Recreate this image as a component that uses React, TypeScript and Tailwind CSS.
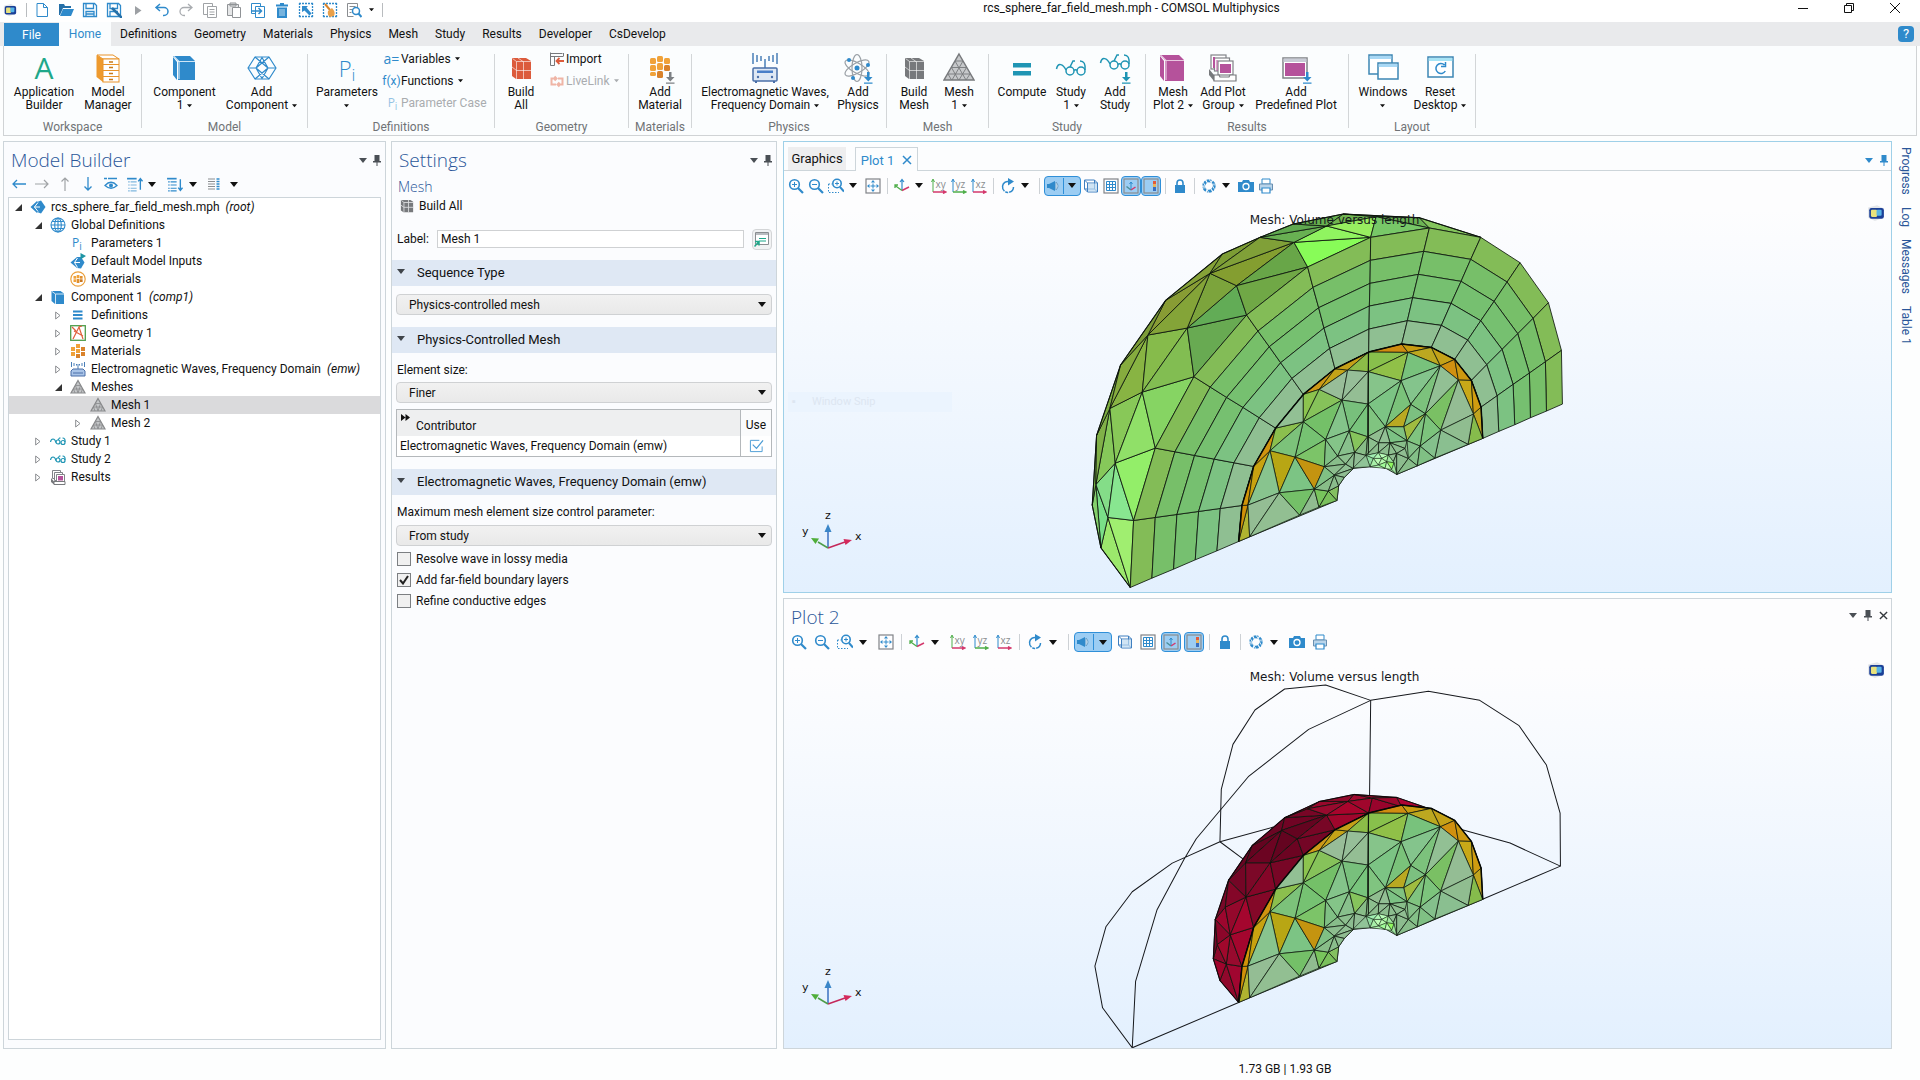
import { useState } from 'react';
import type { ReactNode } from 'react';

/* ---------- icon helpers ---------- */

const B = '#2f8acb';

function Ic({ s = 16, vb = 16, children }: { s?: number; vb?: number; children: ReactNode }) {
  return (
    <svg width={s} height={s} viewBox={`0 0 ${vb} ${vb}`} fill="none" className="block shrink-0" aria-hidden="true">
      {children}
    </svg>
  );
}

function Caret({ color = '#111', big = false }: { color?: string; big?: boolean }) {
  const w = big ? 8 : 5;
  return (
    <svg width={w} height={w / 2 + 1} viewBox="0 0 8 5" fill={color} className="inline-block shrink-0" aria-hidden="true">
      <path d="M0 0h8L4 5z" />
    </svg>
  );
}

function Pin({ color = '#4a4f55' }: { color?: string }) {
  return (
    <svg width="8" height="11" viewBox="0 0 8 11" fill={color} className="block shrink-0" aria-hidden="true">
      <path d="M1.5 0h5v6H8v1.500H4.500V11h-1V7.500H0V6h1.500z" />
    </svg>
  );
}

function AppCube({ s = 14 }: { s?: number }) {
  return (
    <Ic s={s}>
      <path d="M1 3l8-2 6 3v8l-8 3-6-3z" fill="#e3e6ea" />
      <rect x="2" y="3.500" width="13" height="9.500" rx="2" fill="#1b3f97" />
      <rect x="3.500" y="5" width="5.500" height="6.500" rx="1" fill="#e9e27c" />
      <rect x="8.500" y="5" width="4.500" height="5.500" rx="1" fill="#57b4e6" />
    </Ic>
  );
}

/* ---------- ribbon icons, 32px grid ---------- */

const Big = ({ children }: { children: ReactNode }) => (
  <Ic s={32} vb={32}>
    {children}
  </Ic>
);

const cube = (x: number, y: number, w: number, h: number, d: number, c: string) => (
  <g>
    <path d={`M${x} ${y}h${w}l${d} ${d}h-${w}z`} fill={c} />
    <path d={`M${x} ${y + 1}l${d - 1} ${d}v${h}l-${d - 1} -${d}z`} fill={c} />
    <rect x={x + d} y={y + d + 1} width={w} height={h} fill={c} />
  </g>
);

const ModelManagerIcon = () => (
  <Big>
    <path d="M5 3h16l6 4H11z" fill="#fff" stroke="#e8932a" />
    <path d="M4.500 3L11 7v23l-6.500-5z" fill="#ee9a2e" />
    <rect x="11" y="7" width="16" height="23" fill="#fff" stroke="#e8932a" />
    <path d="M11 12.500h16M11 18.500h16M11 24.500h16" stroke="#e8932a" />
    <path d="M17 10h4M17 15.500h4M17 21.500h4M17 27.500h4" stroke="#c77a1a" strokeWidth="1.500" />
  </Big>
);
const ComponentIcon = () => (
  <Big>
    {cube(4, 4, 17, 18, 5, B)}
    <path d="M5 4.500l5 5h16M10 9.500V27" stroke="#cfe6f6" strokeWidth="1.200" />
  </Big>
);
const AddComponentIcon = () => (
  <Big>
    <g stroke={B} strokeWidth="1.200" strokeLinejoin="round">
      <path d="M9 5h14l7 11-7 11H9L2 16z" />
      <path d="M9 5l13 11-13 11M23 5L10 16l13 11M2 16h8M22 16h8M10 16l6-10.500L22 16l-6 10.500z" />
    </g>
  </Big>
);
const BrickIcon = ({ c }: { c: string }) => (
  <Big>
    <path d="M7 6h14l5 3v18H11l-4-3z" fill={c} />
    <path d="M7.500 6.500l4 3h14.500M11.500 9.500V27M18.500 9.500V27M11.500 18.500H26M7 15l4.500 3.500M13 6l5 3.500" stroke="#fff" strokeOpacity=".6" />
  </Big>
);
const honey = (c1: string, c2: string) => (
  <g>
    <rect x="6" y="6" width="6" height="6" rx="1.500" fill={c1} />
    <rect x="13" y="4" width="6" height="6" rx="1.500" fill={c1} />
    <rect x="20" y="6" width="6" height="6" rx="1.500" fill={c1} />
    <rect x="6" y="13" width="6" height="6" rx="1.500" fill={c1} />
    <rect x="13" y="11" width="6" height="7" rx="1.500" fill={c1} />
    <rect x="20" y="13" width="6" height="6" rx="1.500" fill={c2} />
    <rect x="6" y="20" width="6" height="4" rx="1.500" fill={c1} />
    <rect x="13" y="19" width="6" height="7" rx="1.500" fill={c2} />
  </g>
);
const arrowDown = (x: number, y: number, c: string) => (
  <path d={`M${x - 1} ${y}h2.500v5h3l-4.200 4.500L${x - 4} ${y + 5}h3zM${x - 4} ${y + 10.500}h8.500v1.200h-8.500z`} fill={c} />
);
const AddMaterialIcon = () => (
  <Big>
    {honey('#f0a23a', '#d9822b')}
    {arrowDown(26, 20, '#7c8084')}
  </Big>
);
const EmIcon = () => (
  <Big>
    <path d="M4 1v11M8 3v7M12 4v5M20 4v5M24 3v7M28 1v11M16 7v9" stroke="#4a7fb8" strokeWidth="1.500" />
    <rect x="4" y="16" width="24" height="13" rx="1" fill="#dfe8f4" stroke="#4a6fa8" strokeWidth="1.500" />
    <rect x="8" y="18.500" width="16" height="2.500" fill="#4a7fc8" />
    <circle cx="9" cy="25" r="1.200" fill="#4a6fa8" />
    <circle cx="23" cy="25" r="1.200" fill="#4a6fa8" />
    <path d="M7 29v2M25 29v2" stroke="#4a6fa8" strokeWidth="2" />
  </Big>
);
const AtomIcon = () => (
  <Big>
    <g stroke="#9aa0a6" strokeWidth="1.200">
      <ellipse cx="15" cy="16" rx="5" ry="13.500" />
      <ellipse cx="15" cy="16" rx="5" ry="13.500" transform="rotate(60 15 16)" />
      <ellipse cx="15" cy="16" rx="5" ry="13.500" transform="rotate(-60 15 16)" />
    </g>
    <circle cx="15" cy="16" r="2.500" fill={B} />
    <circle cx="7" cy="8" r="2" fill={B} />
    <circle cx="26" cy="13" r="2" fill={B} />
    <circle cx="11" cy="26" r="2" fill={B} />
    {arrowDown(26, 20, B)}
  </Big>
);
const MeshIcon = () => (
  <Big>
    <path d="M16 2L31 28H1z" fill="#c6c8ca" stroke="#77797c" strokeWidth="1.500" />
    <g stroke="#77797c" strokeWidth=".9">
      <path d="M12 9h8M8.500 15.500h15M5 22h22M12 9l11 19M8.500 15.500L15.500 28M5 22l3.500 6M20 9L9 28M23.500 15.500L16 28M27 22l-4 6" />
    </g>
  </Big>
);
const ComputeIcon = () => (
  <Big>
    <path d="M7 11h18v4.500H7zM7 19h18v4.500H7z" fill="#1f95b4" />
  </Big>
);
const glasses = (dy: number) => (
  <g stroke="#1f95b4" strokeWidth="1.500" transform={`translate(0 ${dy})`}>
    <circle cx="15" cy="19" r="4" />
    <circle cx="26" cy="19" r="4" />
    <path d="M19 18.500q1.500-1.500 3 0M11 18C8 12 3 10 1.500 17M15 15l3-6h2M30 18q1-9-5-9" />
  </g>
);
const StudyIcon = () => <Big>{glasses(0)}</Big>;
const AddStudyIcon = () => (
  <Big>
    {glasses(-6)}
    {arrowDown(27, 20, '#1f95b4')}
  </Big>
);
const MeshPlotIcon = () => (
  <Big>
    {cube(3, 3, 19, 20, 5, '#b5529b')}
    <path d="M4 3.500l5 5h18M9 8.500V28" stroke="#e8c6df" strokeWidth="1.200" />
  </Big>
);
const PlotGroupIcon = () => (
  <Big>
    <g stroke="#808387" strokeWidth="1.200">
      <rect x="4" y="3" width="15" height="14" fill="#fff" />
      <rect x="7.500" y="6" width="15" height="13" fill="#fff" />
      <rect x="11" y="9" width="15" height="14" fill="#fff" />
    </g>
    <path d="M6 5h2v11H6zM9.500 8h1v11h-1zM13 12h11v9H13z" fill="#b5529b" />
    <path d="M2 17l5 6v6l-5-6z" fill="#77797c" />
    <path d="M7 23h5l1 2h9l1-2h6v6H7z" fill="#fff" stroke="#77797c" strokeWidth="1.200" />
  </Big>
);
const PredefIcon = () => (
  <Big>
    <rect x="3" y="6" width="24" height="20" fill="#fff" stroke="#808387" strokeWidth="1.500" />
    <rect x="3.500" y="6.500" width="23" height="3.500" fill="#c9ccd6" />
    <rect x="5" y="11" width="20" height="13" fill="#b5529b" />
    {arrowDown(27, 20, B)}
  </Big>
);
const WindowsIcon = () => (
  <Big>
    <rect x="2" y="3" width="23" height="19" fill="#fff" stroke="#3d86b4" strokeWidth="1.500" />
    <path d="M2.700 4h21.600v3H2.700z" fill="#a8d8f5" />
    <rect x="11" y="11" width="20" height="16" fill="#fff" stroke="#3d86b4" strokeWidth="1.500" />
    <path d="M11.700 12h18.600v3H11.700z" fill="#a8d8f5" />
  </Big>
);
const ResetIcon = () => (
  <Big>
    <rect x="4" y="5" width="25" height="20" fill="#fff" stroke="#3d86b4" strokeWidth="1.500" />
    <path d="M4.700 6h23.600v3H4.700z" fill="#a8e4f5" />
    <path d="M20.500 13a5 5 0 1 0 .800 6M17 14.500h4.500V10" stroke={B} strokeWidth="1.500" />
  </Big>
);

/* ---------- small icons ---------- */

const TitleIcons: ReactNode[] = [
  <Ic key="new"><path d="M3 1.500h6.500l4 4v9H3zM9.500 1.500v4h4" stroke={B} fill="#fff" /></Ic>,
  <Ic key="open"><path d="M1 2h5l1 2h6v2H5l-3 7H1z" fill="#2670a8" /><path d="M5 7h11l-3 7H2z" fill={B} /></Ic>,
  <Ic key="save"><path d="M1.500 1.500h11l2 2v11h-13zM4 1.500v5h7.500v-5M4 14.500v-5h8v5M4.500 12h7" stroke={B} strokeWidth="1.300" /></Ic>,
  <Ic key="saveas"><path d="M1.500 1.500h11l2 2v11h-13zM4 1.500v5h7.500v-5M4 14.500v-5h8" stroke={B} strokeWidth="1.300" /><path d="M6 6l8 8 2 2" stroke="#2670a8" strokeWidth="2.500" /></Ic>,
  <Ic key="play"><path d="M5 4l6.500 4.500L5 13z" fill="#9da0a4" /></Ic>,
  <Ic key="undo"><path d="M6 2L2 5.500 6 9M2.500 5.500H10a4 4 0 0 1 0 8H9" stroke={B} strokeWidth="1.500" /></Ic>,
  <Ic key="redo"><path d="M10 2l4 3.500L10 9M13.500 5.500H6a4 4 0 0 0 0 8h1" stroke="#a9acb0" strokeWidth="1.300" /></Ic>,
  <Ic key="copy"><path d="M1.500 1.500h9v11h-9z" stroke="#a0a3a6" /><path d="M5.500 4.500h9v11h-9zM7.500 7.500h5M7.500 10h5M7.500 12.500h5" fill="#fff" stroke="#a0a3a6" /></Ic>,
  <Ic key="paste"><path d="M1.500 2.500h11v11h-11zM4 1h6v3H4z" stroke="#909396" fill="#e6e7e8" /><path d="M6.500 5.500h8v10h-8z" fill="#fff" stroke="#909396" /></Ic>,
  <Ic key="dup"><path d="M1.500 1.500h9v10h-9z" stroke={B} /><path d="M5.500 4.500h9v11h-9z" fill="#fff" stroke={B} /><path d="M2 9h9M8.500 6l3 3-3 3" stroke={B} strokeWidth="1.500" /></Ic>,
  <Ic key="del"><path d="M2 2.500h12v2H2zM6 1h4v1.500H6zM3 5.500h10V16H3z" fill={B} /><path d="M6 7v7M8 7v7M10 7v7" stroke="#fff" strokeWidth=".7" /></Ic>,
  <Ic key="sel"><path d="M1 1.500h14M1 14.500h14M1.500 1v14M14.500 1v14" stroke={B} strokeDasharray="2 1" strokeWidth="1.300" /><path d="M4 4h6l-1.500 1.500 5 6-2 2-5-5L4 10z" fill={B} /></Ic>,
  <Ic key="brush"><path d="M1 1.500h14M1 14.500h14M1.500 1v14M14.500 1v14" stroke={B} strokeDasharray="2 1" strokeWidth="1.300" /><path d="M3 2l5 6" stroke="#d8832a" strokeWidth="2" /><path d="M6 9l4-3q4 4 2 8l-4 1q-3-2-2-6z" fill="#e8a04a" /></Ic>,
  <Ic key="find"><path d="M11.500 6V1.500h-10v13h6M3.500 4.500h6M3.500 7.500h4M3.500 10.500h2" stroke="#8a8d90" /><circle cx="10" cy="9" r="3.500" stroke={B} strokeWidth="1.500" fill="#fff" /><path d="M12.500 11.500l3 3.500" stroke={B} strokeWidth="2" /></Ic>,
];

const PiGlyph = () => <span className="pl-0.5 font-['Open_Sans'] text-[12px] leading-4 text-[#2f8acb]">P<sub className="text-[10px]">i</sub></span>;

const RootIcon = () => (
  <Ic><path d="M7 2L.5 8 7 14l1-2-4-4 4-4z" fill={B} /><path d="M7 3l4-1.500L15.500 8 11 14.500 7 13l-3-5z" fill={B} /><path d="M8 3.500L4.500 8 8 12.500M4.500 8H10" stroke="#fff" /></Ic>
);
const GlobeIcon = () => (
  <Ic><g stroke={B} strokeWidth="1.100"><circle cx="8" cy="8" r="7" /><ellipse cx="8" cy="8" rx="3.300" ry="7" /><path d="M8 1v14M1 8h14M2.200 4.500h11.600M2.200 11.500h11.600" /></g></Ic>
);
const InputsIcon = () => (
  <Ic><path d="M7 4l-6.500 5.500L7 15l4 .5 3.500-6L11 4z" fill={B} /><path d="M7.500 5L4.500 9.500l3 5M4.500 9.500H10" stroke="#fff" /><path d="M10.500 0l5.500 3-5.500 3.500z" fill="#1f95a4" /></Ic>
);
const comb = (
  <g>
    <rect x="3.500" y="5" width="2.700" height="2.700" fill="#f0a23a" /><rect x="6.700" y="4" width="2.700" height="3.200" fill="#f0a23a" /><rect x="9.900" y="5" width="2.700" height="2.700" fill="#e0902f" />
    <rect x="3.500" y="8.300" width="2.700" height="2.700" fill="#f0a23a" /><rect x="6.700" y="8" width="2.700" height="4" fill="#e0902f" /><rect x="9.900" y="8.300" width="2.700" height="2.700" fill="#c9761f" />
  </g>
);
const GlobalMatIcon = () => <Ic><circle cx="8" cy="8" r="7.200" stroke="#eba03c" strokeWidth="1.200" />{comb}</Ic>;
const MatIcon = () => (
  <Ic>
    <g fill="#f0a23a"><rect x="1" y="4" width="4" height="4" /><rect x="6" y="1" width="4" height="4" /><rect x="1" y="9" width="4" height="4" /><rect x="6" y="6" width="4" height="4" /></g>
    <g fill="#d9822b"><rect x="11" y="4" width="4" height="4" /><rect x="11" y="9" width="4" height="4" /><rect x="6" y="11" width="4" height="4" /></g>
  </Ic>
);
const CompIcon = () => (
  <Ic><path d="M1.500 2h9l3.500 2.500V15H5l-3.500-3z" fill={B} /><path d="M2 2.500l3.500 2.500H14M5.500 5v10" stroke="#cfe6f6" /></Ic>
);
const DefsIcon = () => <Ic><path d="M3 4.500h9.500M3 8h9.500M3 11.500h9.500" stroke={B} strokeWidth="1.800" /></Ic>;
const GeomIcon = () => (
  <Ic><rect x=".7" y=".7" width="14.600" height="14.600" stroke="#4f9d4a" strokeWidth="1.300" fill="#fff" /><path d="M2 2l4 4M3 14L9 2l4 12M4 6l9 5M9 2l3-1" stroke="#e0603c" strokeWidth="1.200" /></Ic>
);
const EmSmall = () => (
  <Ic><path d="M1.500 1v5M4 2v3M6.500 3v1.500M9.500 3v1.500M12 2v3M14.500 1v5M8 3v5" stroke="#4a7fb8" /><path d="M3 8h10l2 2v5H1v-5z" fill="#a9c4e8" stroke="#4a6fa8" /><path d="M3 12h10" stroke="#4a6fa8" /></Ic>
);
const MeshSmall = () => (
  <Ic><path d="M8 1.500l7 12.500H1z" fill="#c3c5c7" stroke="#88898b" strokeWidth="1.200" /><path d="M5.500 6.500h5M3.500 10h9M5.500 6.500l2.500 7.500M10.500 6.500L8 14M3.500 10L5 14M12.500 10L11 14" stroke="#88898b" strokeWidth=".8" /></Ic>
);
const StudySmall = () => (
  <Ic><g stroke="#1f95b4" strokeWidth="1.200"><circle cx="8" cy="9" r="2" /><circle cx="13" cy="9.500" r="2" /><path d="M6 9.500Q5 6 3 6T.5 9M8 7l1.500-2h1M15 9q.5-4-2.500-4" /></g></Ic>
);
const ResultsSmall = () => (
  <Ic><g stroke="#808387"><path d="M2.500 1.500h8v8h-8z" fill="#fff" /><path d="M4.500 3.500h8v8h-8z" fill="#fff" /><path d="M6.500 5.500h8v7h-8z" fill="#fff" /></g><path d="M8 7h5v4.500H8z" fill="#b5529b" /><path d="M1 9l3 3.500v3L1 13z" fill="#77797c" /><path d="M4 12.500h11v3H4z" fill="#fff" stroke="#77797c" /></Ic>
);

/* ---------- ribbon ---------- */

type Cmd = { icon: ReactNode; l1: string; l2?: string; caret?: boolean; w: string };

function RibbonButton({ icon, l1, l2, caret, w }: Cmd) {
  return (
    <button type="button" className={`flex shrink-0 flex-col items-center ${w}`}>
      <span className="flex h-8 items-center justify-center">{icon}</span>
      <span className="mt-0.5 text-center text-xs leading-[13px] whitespace-nowrap">
        {l1}
        <br />
        {l2}
        {caret && (
          <span className={l2 ? 'ml-1 inline-flex align-middle' : 'inline-flex align-middle'}>
            <Caret />
          </span>
        )}
      </span>
    </button>
  );
}

function Group({ label, w, children }: { label: string; w: string; children: ReactNode }) {
  return (
    <>
      <section aria-label={label} className={`flex flex-col ${w}`}>
        <div className="flex h-[74px] pt-1.5 pl-1">{children}</div>
        <div className="text-center text-xs leading-[14px] text-[#707376]">{label}</div>
      </section>
      <div className="mt-2 h-[74px] w-px shrink-0 bg-[#d3d6d8]" />
    </>
  );
}

function SmallCmd({ icon, label, caret, off }: { icon: ReactNode; label: string; caret?: boolean; off?: boolean }) {
  return (
    <button type="button" disabled={off} className={`flex h-[22px] items-center ${off ? 'text-[#a9acaf]' : ''}`}>
      <span className="flex w-[19px] items-center justify-center">{icon}</span>
      <span className="whitespace-nowrap">{label}</span>
      {caret && (
        <span className="ml-1 flex">
          <Caret color={off ? '#a9acaf' : '#111'} />
        </span>
      )}
    </button>
  );
}

const RIBBON_TABS = ['Definitions', 'Geometry', 'Materials', 'Physics', 'Mesh', 'Study', 'Results', 'Developer', 'CsDevelop'];

function Ribbon() {
  return (
    <>
      <nav className="flex h-6 shrink-0 items-stretch bg-[#e9eaec] pl-1 text-xs">
        <button type="button" className="mt-px w-[55px] bg-[#2f8acb] text-white">File</button>
        <button type="button" className="w-[52px] bg-[#fbfdfe] text-[#2f8acb]">Home</button>
        {RIBBON_TABS.map((t) => (
          <button key={t} type="button" className="pr-2 pl-[9px]">{t}</button>
        ))}
        <button type="button" aria-label="Help" className="mr-1.5 ml-auto h-4 w-4 self-center rounded-sm bg-[#2f8acb] text-[13px] leading-4 text-white">?</button>
      </nav>
      <div className="mx-[3px] flex h-[90px] shrink-0 border border-t-0 border-[#d0d3d5] bg-[#fbfdfe] text-xs">
        <Group label="Workspace" w="w-[137px]">
          <RibbonButton w="w-[72px]" icon={<span className="font-['Open_Sans'] text-[30px] leading-8 text-[#1fa88a]">A</span>} l1="Application" l2="Builder" />
          <RibbonButton w="w-14" icon={<ModelManagerIcon />} l1="Model" l2="Manager" />
        </Group>
        <Group label="Model" w="w-[165px]">
          <RibbonButton w="w-[77px]" icon={<ComponentIcon />} l1="Component" l2="1" caret />
          <RibbonButton w="w-[77px]" icon={<AddComponentIcon />} l1="Add" l2="Component" caret />
        </Group>
        <Group label="Definitions" w="w-[186px]">
          <RibbonButton w="w-[70px]" icon={<span className="font-['Open_Sans'] text-[22px] leading-8 font-light text-[#2f8acb]">P<sub className="text-[17px]">i</sub></span>} l1="Parameters" caret />
          <div className="-mt-1 flex flex-col">
            <SmallCmd icon={<span className="font-['Open_Sans'] text-[14px] leading-4 text-[#2f8acb]">a=</span>} label="Variables" caret />
            <SmallCmd icon={<span className="text-[12px] leading-4 text-[#2f8acb]">f(x)</span>} label="Functions" caret />
            <SmallCmd icon={<span className="opacity-50"><PiGlyph /></span>} label="Parameter Case" off />
          </div>
        </Group>
        <Group label="Geometry" w="w-[133px]">
          <RibbonButton w="w-11" icon={<BrickIcon c="#dc5b3c" />} l1="Build" l2="All" />
          <div className="-mt-1 ml-1 flex flex-col">
            <SmallCmd icon={<Ic><path d="M1.500 2.500h12M1.500 1.500v13h4M1.500 5.500h13M5.500 5.500v9M14.500 2v3" stroke="#77797c" /><path d="M15 10H8M10.500 7l-3 3 3 3" stroke="#dc5b3c" strokeWidth="1.800" /></Ic>} label="Import" />
            <SmallCmd icon={<Ic><path d="M7 11.500H2.500v-6H7M5.500 3.500l2 2-2 2M9 5.500h4.500v6H9M10.500 9.500l-2 2 2 2" stroke="#efb5a6" strokeWidth="2" /></Ic>} label="LiveLink" caret off />
          </div>
        </Group>
        <Group label="Materials" w="w-[62px]">
          <RibbonButton w="w-[54px]" icon={<AddMaterialIcon />} l1="Add" l2="Material" />
        </Group>
        <Group label="Physics" w="w-[194px]">
          <RibbonButton w="w-[138px]" icon={<EmIcon />} l1="Electromagnetic Waves," l2="Frequency Domain" caret />
          <RibbonButton w="w-12" icon={<AtomIcon />} l1="Add" l2="Physics" />
        </Group>
        <Group label="Mesh" w="w-[101px]">
          <RibbonButton w="w-[46px]" icon={<BrickIcon c="#77797c" />} l1="Build" l2="Mesh" />
          <RibbonButton w="w-[44px]" icon={<MeshIcon />} l1="Mesh" l2="1" caret />
        </Group>
        <Group label="Study" w="w-[156px]">
          <RibbonButton w="w-[58px]" icon={<ComputeIcon />} l1="Compute" />
          <RibbonButton w="w-[40px]" icon={<StudyIcon />} l1="Study" l2="1" caret />
          <RibbonButton w="w-[48px]" icon={<AddStudyIcon />} l1="Add" l2="Study" />
        </Group>
        <Group label="Results" w="w-[202px]">
          <RibbonButton w="w-[46px]" icon={<MeshPlotIcon />} l1="Mesh" l2="Plot 2" caret />
          <RibbonButton w="w-[54px]" icon={<PlotGroupIcon />} l1="Add Plot" l2="Group" caret />
          <RibbonButton w="w-[92px]" icon={<PredefIcon />} l1="Add" l2="Predefined Plot" />
        </Group>
        <Group label="Layout" w="w-[126px]">
          <RibbonButton w="w-[60px]" icon={<WindowsIcon />} l1="Windows" caret />
          <RibbonButton w="w-[54px]" icon={<ResetIcon />} l1="Reset" l2="Desktop" caret />
        </Group>
      </div>
    </>
  );
}

/* ---------- model builder ---------- */

type Node = { pad: string; arrow: 'open' | 'closed' | 'none'; icon: ReactNode; label: string; tag?: string; sel?: boolean };

const P0 = 'pl-[3px]';
const P1 = 'pl-[23px]';
const P2 = 'pl-[43px]';
const P3 = 'pl-[63px]';

const TREE: Node[] = [
  { pad: P0, arrow: 'open', icon: <RootIcon />, label: 'rcs_sphere_far_field_mesh.mph', tag: '(root)' },
  { pad: P1, arrow: 'open', icon: <GlobeIcon />, label: 'Global Definitions' },
  { pad: P2, arrow: 'none', icon: <PiGlyph />, label: 'Parameters 1' },
  { pad: P2, arrow: 'none', icon: <InputsIcon />, label: 'Default Model Inputs' },
  { pad: P2, arrow: 'none', icon: <GlobalMatIcon />, label: 'Materials' },
  { pad: P1, arrow: 'open', icon: <CompIcon />, label: 'Component 1', tag: '(comp1)' },
  { pad: P2, arrow: 'closed', icon: <DefsIcon />, label: 'Definitions' },
  { pad: P2, arrow: 'closed', icon: <GeomIcon />, label: 'Geometry 1' },
  { pad: P2, arrow: 'closed', icon: <MatIcon />, label: 'Materials' },
  { pad: P2, arrow: 'closed', icon: <EmSmall />, label: 'Electromagnetic Waves, Frequency Domain', tag: '(emw)' },
  { pad: P2, arrow: 'open', icon: <MeshSmall />, label: 'Meshes' },
  { pad: P3, arrow: 'none', icon: <MeshSmall />, label: 'Mesh 1', sel: true },
  { pad: P3, arrow: 'closed', icon: <MeshSmall />, label: 'Mesh 2' },
  { pad: P1, arrow: 'closed', icon: <StudySmall />, label: 'Study 1' },
  { pad: P1, arrow: 'closed', icon: <StudySmall />, label: 'Study 2' },
  { pad: P1, arrow: 'closed', icon: <ResultsSmall />, label: 'Results' },
];

function PanelHead({ title }: { title: string }) {
  return (
    <header className="flex h-8 shrink-0 items-center pt-1 pr-1 pl-[7px]">
      <h2 className="mr-auto font-['Open_Sans'] text-[19px] leading-6 font-light text-[#2a5699]">{title}</h2>
      <button type="button" aria-label={`${title} menu`} className="mr-1.5 flex"><Caret big color="#4a4f55" /></button>
      <button type="button" aria-label={`Pin ${title}`}><Pin /></button>
    </header>
  );
}

const tool = (k: string, el: ReactNode, w = 'w-[23px]') => (
  <button key={k} type="button" aria-label={k} className={`flex h-5 items-center justify-center ${w}`}>{el}</button>
);

function ModelBuilder() {
  return (
    <section className="flex w-[383px] shrink-0 flex-col border border-[#cdd5da] bg-[#fbfcfe]">
      <PanelHead title="Model Builder" />
      <div className="mb-[3px] flex h-5 items-center pl-[3px]">
        {tool('Back', <Ic><path d="M15 8H2M6 4L2 8l4 4" stroke={B} strokeWidth="1.300" /></Ic>)}
        {tool('Forward', <Ic><path d="M1 8h13M10 4l4 4-4 4" stroke="#a0a3a6" strokeWidth="1.200" /></Ic>)}
        {tool('Up', <Ic><path d="M8 15V2M4.500 5.500L8 2l3.500 3.500" stroke="#a0a3a6" strokeWidth="1.200" /></Ic>)}
        {tool('Down', <Ic><path d="M8 1v13M4.500 10.500L8 14l3.500-3.500" stroke={B} strokeWidth="1.300" /></Ic>)}
        {tool('Show', <Ic><path d="M1 2.500h3M5 2.500h9" stroke={B} strokeWidth="1.600" /><path d="M2 9.500q6-6.500 12 0-6 5.500-12 0z" stroke={B} strokeWidth="1.300" /><circle cx="8" cy="9.500" r="2" fill={B} /></Ic>)}
        {tool('Collapse', <Ic s={17}><path d="M1 2.500h9" stroke={B} strokeWidth="1.600" /><path d="M2 5.500h8M2 8.500h8M2 11.500h8M2 14h8" stroke="#7fb6de" strokeDasharray="1.500 .8 6" /><path d="M13.500 13V3M11.500 5l2-2.500 2 2.500" stroke={B} strokeWidth="1.300" /></Ic>, 'w-6')}
        {tool('Collapse options', <Caret big />, 'w-3')}
        {tool('Expand', <Ic s={17}><path d="M1 2.500h9" stroke={B} strokeWidth="1.600" /><path d="M2 5.500h8M2 8.500h8M2 11.500h8M2 14h8" stroke={B} strokeDasharray="1.500 .8 6" /><path d="M13.500 3v10M11.500 11l2 2.500 2-2.500" stroke={B} strokeWidth="1.300" /></Ic>, 'w-[33px]')}
        {tool('Expand options', <Caret big />, 'w-1')}
        {tool('Columns', <Ic><path d="M2 3h7M2 5.500h7M2 8h7M2 10.500h7M2 13h7" stroke="#8a8d90" /><path d="M10.500 3h3M10.500 5.500h3M10.500 8h3M10.500 10.500h3M10.500 13h3" stroke={B} strokeWidth="1.500" /></Ic>, 'w-[37px]')}
        {tool('Column options', <Caret big />, 'w-1')}
      </div>
      <ul role="tree" aria-label="Model tree" className="mr-1 mb-2 ml-1 flex-1 overflow-hidden border border-[#cdd5da] bg-white">
        {TREE.map((n, i) => (
          <li key={i} role="treeitem" aria-selected={!!n.sel} className={`flex h-[18px] items-center text-xs ${n.pad} ${n.sel ? 'bg-[#dadadc]' : ''}`}>
            <span className="flex w-[17px] shrink-0 items-center pl-[3px]">
              {n.arrow === 'open' && <svg width="7" height="7" viewBox="0 0 7 7" fill="#333"><path d="M7 0v7H0z" /></svg>}
              {n.arrow === 'closed' && <svg width="6" height="9" viewBox="0 0 6 9" fill="#fff" stroke="#8a8d90"><path d="M.7 1v7L5 4.500z" /></svg>}
            </span>
            <span className="flex w-[22px] shrink-0 items-center pl-px">{n.icon}</span>
            <span className="whitespace-nowrap">
              {n.label}
              {n.tag && <i className="ml-1.5">{n.tag}</i>}
            </span>
          </li>
        ))}
      </ul>
    </section>
  );
}

/* ---------- settings ---------- */

function SectionHead({ title }: { title: string }) {
  return (
    <h3>
      <button type="button" aria-expanded="true" className="flex h-[26px] w-full items-center bg-[#dfe8f4] pl-[5px] text-[13px]">
        <span className="mr-[13px] mb-1 flex w-[7px]"><Caret big color="#3f444a" /></span>
        {title}
      </button>
    </h3>
  );
}

function Drop({ id, options }: { id: string; options: string[] }) {
  return (
    <div className="relative mx-1">
      <select id={id} className="block h-[21px] w-full appearance-none rounded-sm border border-[#cfd1d3] bg-linear-to-b from-[#f1f1f1] to-[#e9e9e9] pl-3 text-xs">
        {options.map((o) => <option key={o}>{o}</option>)}
      </select>
      <span className="pointer-events-none absolute inset-y-0 right-1.5 flex items-center"><Caret big /></span>
    </div>
  );
}

function Settings() {
  const [checks, setChecks] = useState([
    { id: 'lossy', label: 'Resolve wave in lossy media', on: false },
    { id: 'farfield', label: 'Add far-field boundary layers', on: true },
    { id: 'edges', label: 'Refine conductive edges', on: false },
  ]);
  return (
    <section className="flex w-[386px] shrink-0 flex-col border border-[#cdd5da] bg-[#fbfcfe] text-xs">
      <PanelHead title="Settings" />
      <div className="h-6 pl-[6px] font-['Open_Sans'] text-sm leading-[26px] font-light text-[#2a5699]">Mesh</div>
      <button type="button" className="flex h-4 items-center self-start pl-2">
        <Ic s={14}><path d="M1 1h11l3 2v12H4L1 13z" fill="#77797c" /><path d="M1.500 1.500l3 2.500H15M4.500 4v11M9.700 1v14M1 7l3.500 2.500H15" stroke="#dcdddf" /></Ic>
        <span className="ml-[5px]">Build All</span>
      </button>
      <div className="mt-[13px] flex h-6 items-center pr-1 pl-[5px]">
        <label htmlFor="label" className="w-10">Label:</label>
        <input id="label" type="text" defaultValue="Mesh 1" className="h-[18px] flex-1 border border-[#cfd1d3] bg-white px-[3px]" />
        <button type="button" aria-label="Label options" className="ml-2 flex h-[21px] w-5 items-center justify-center rounded-sm border border-[#d3d5d7] bg-[#f1f2f3]">
          <Ic><path d="M1.500 1.500h13v12h-13z" fill="#fff" stroke="#8a8d90" /><path d="M2 2h12v2H2z" fill="#b9bcc0" /><path d="M5 7.500h7M5 10h7" stroke="#1fa88a" /><path d="M5 10v4.500M5 10.500H1M5 10.500l-4.500 5" stroke="#1fa88a" strokeWidth="1.500" /></Ic>
        </button>
      </div>
      <div className="mt-[9px]"><SectionHead title="Sequence Type" /></div>
      <div className="mt-2"><Drop id="seq" options={['Physics-controlled mesh', 'User-controlled mesh']} /></div>
      <div className="mt-3"><SectionHead title="Physics-Controlled Mesh" /></div>
      <label htmlFor="size" className="mt-2 mb-[3px] block h-[18px] pl-[5px] leading-[18px]">Element size:</label>
      <Drop id="size" options={['Finer', 'Normal', 'Coarser']} />
      <table className="mx-1 mt-1.5 border border-[#b4b8bb]">
        <thead>
          <tr className="h-[26px]">
            <th className="border-r border-[#b4b8bb] bg-[#eeeff0] p-0 text-left font-normal">
              <span className="flex items-start pl-1">
                <svg width="9" height="7" viewBox="0 0 9 7" className="mt-0.5 mr-1.5" aria-hidden="true"><path d="M0 0l4.500 3.500L0 7zM4.500 0L9 3.500 4.500 7z" fill="#111" /></svg>
                <span className="pt-1.5 leading-4">Contributor</span>
              </span>
            </th>
            <th className="w-[31px] bg-[#fafbfc] p-0 pt-1 text-center font-normal">Use</th>
          </tr>
        </thead>
        <tbody>
          <tr className="h-[21px] bg-white">
            <td className="border-r border-[#b4b8bb] p-0 pl-[3px]">Electromagnetic Waves, Frequency Domain (emw)</td>
            <td className="p-0">
              <label className="flex justify-center">
                <input type="checkbox" defaultChecked aria-label="Use Electromagnetic Waves" className="sr-only" />
                <Ic s={15}><path d="M14 9v5.500H1.500v-12H11" stroke="#4a9bd4" /><path d="M4 7l4 4 7-8.500" stroke="#4a9bd4" strokeWidth="1.300" /></Ic>
              </label>
            </td>
          </tr>
        </tbody>
      </table>
      <div className="mt-3"><SectionHead title="Electromagnetic Waves, Frequency Domain (emw)" /></div>
      <label htmlFor="param" className="mt-2 mb-1 block h-[18px] pl-[5px] leading-[18px]">Maximum mesh element size control parameter:</label>
      <Drop id="param" options={['From study', 'User defined']} />
      <div className="mt-0.5 flex flex-col pl-[5px]">
        {checks.map((c, i) => (
          <label key={c.id} htmlFor={c.id} className="flex h-[21px] items-center gap-[5px]">
            <span className="grid h-3.5 w-3.5 place-items-center">
              <input
                id={c.id}
                type="checkbox"
                checked={c.on}
                onChange={() => setChecks(checks.map((k, j) => (j === i ? { ...k, on: !k.on } : k)))}
                className="col-start-1 row-start-1 h-3.5 w-3.5 appearance-none border border-[#7c7f82] bg-[#f0f0f0]"
              />
              {c.on && <svg width="10" height="10" viewBox="0 0 10 10" fill="none" className="pointer-events-none col-start-1 row-start-1"><path d="M1 5l3 3.500L9 1" stroke="#222" strokeWidth="2" /></svg>}
            </span>
            {c.label}
          </label>
        ))}
      </div>
    </section>
  );
}

/* ---------- mesh geometry ---------- */

type Pt = [number, number];

const OUTER: Pt[] = [[151, 1162], [161, 961], [226, 744], [342, 530], [500, 345], [683, 201], [872, 112], [1048, 84], [1202, 112], [1320, 188], [1405, 308], [1444, 451], [1447, 612]];
const INNER: Pt[] = [[476, 1024], [486, 916], [521, 799], [587, 684], [670, 583], [765, 506], [866, 456], [965, 432], [1054, 442], [1124, 478], [1174, 541], [1203, 621], [1208, 715]];

const RINGS = ['#83bc57', '#77bf69', '#76c070', '#7cc282', '#8fbf92'];

const mix = (a: Pt, b: Pt, t: number): Pt => [Math.round(a[0] + (b[0] - a[0]) * t), Math.round(a[1] + (b[1] - a[1]) * t)];
const pts = (p: Pt[]) => p.map((q) => q.join(',')).join(' ');

const CELLS = RINGS.flatMap((fill, r) =>
  OUTER.slice(0, -1).map((o, i) => ({
    fill,
    p: [mix(o, INNER[i], r / 5), mix(OUTER[i + 1], INNER[i + 1], r / 5), mix(OUTER[i + 1], INNER[i + 1], (r + 1) / 5), mix(o, INNER[i], (r + 1) / 5)],
  })),
);

const SHELL: [string, string][] = [
  ['151,1162 63,1043 84,952', '#9ce86c'],
  ['151,1162 84,952 161,961', '#a0ee70'],
  ['63,1043 48,853 84,952', '#7adf88'],
  ['63,1043 37,915 48,853', '#84d06c'],
  ['48,853 106,789 84,952', '#84dd88'],
  ['84,952 106,789 161,961', '#88e690'],
  ['106,789 226,744 161,961', '#93ee69'],
  ['48,853 90,625 106,789', '#86c85a'],
  ['37,915 50,706 48,853', '#7cb848'],
  ['50,706 90,625 48,853', '#80b048'],
  ['90,625 187,576 106,789', '#88c858'],
  ['187,576 226,744 106,789', '#90e068'],
  ['187,576 342,530 226,744', '#86d463'],
  ['90,625 204,405 187,576', '#88b443'],
  ['50,706 122,495 90,625', '#7cac40'],
  ['122,495 204,405 90,625', '#86ac3e'],
  ['204,405 322,384 187,576', '#86bb4b'],
  ['322,384 342,530 187,576', '#82bd52'],
  ['322,384 500,345 342,530', '#68aa52'],
  ['322,384 470,257 500,345', '#62ac56'],
  ['390,220 470,257 322,384', '#7ca43c'],
  ['390,220 322,384 204,405', '#84a438'],
  ['257,301 390,220 204,405', '#889c34'],
  ['122,495 257,301 204,405', '#7c9c38'],
  ['257,301 427,162 390,220', '#86a238'],
  ['390,220 642,127 470,257', '#849e30'],
  ['470,257 642,127 683,201', '#68a648'],
  ['470,257 683,201 500,345', '#70a846'],
  ['427,162 540,112 390,220', '#7c9c34'],
  ['390,220 540,112 642,127', '#80a038'],
  ['642,127 872,112 683,201', '#88fc58'],
  ['642,127 740,78 872,112', '#90f460'],
  ['540,112 740,78 642,127', '#68b052'],
  ['540,112 640,72 740,78', '#60a850'],
  ['640,72 790,42 740,78', '#68b050'],
  ['740,78 790,42 888,50', '#70b450'],
  ['740,78 888,50 872,112', '#98ee60'],
  ['790,42 1018,53 888,50', '#68ac50'],
  ['888,50 1018,53 1048,84', '#6cb454'],
  ['888,50 1048,84 872,112', '#78c868'],
  ['1018,53 1202,112 1048,84', '#84c45c'],
];

const DISC: [string, string][] = [
  ['476,1024 509,1010 504,915', '#b0b430'], ['476,1024 504,915 486,916', '#d09008'],
  ['486,916 504,915 521,799', '#d09408'], ['504,915 570,752 521,799', '#c8a210'],
  ['521,799 587,684 570,752', '#d09410'], ['587,684 670,665 570,752', '#8bbf4e'],
  ['587,684 670,583 670,665', '#92c094'], ['670,583 718,568 765,506', '#cc9818'],
  ['718,568 803,510 765,506', '#c4a418'], ['670,583 718,568 670,665', '#8cc44e'],
  ['718,568 786,600 670,665', '#86c25a'], ['718,568 803,510 786,600', '#98bd98'],
  ['765,506 803,510 866,456', '#c4a018'], ['803,510 865,515 866,456', '#8cbc48'],
  ['803,510 865,515 786,600', '#96be98'], ['865,515 864,612 786,600', '#94be94'],
  ['866,456 984,457 965,432', '#d08c10'], ['866,456 865,515 984,457', '#88c04c'],
  ['865,515 963,542 984,457', '#90c048'], ['865,515 864,612 963,542', '#86c48a'],
  ['965,432 984,457 1054,442', '#c89c10'], ['984,457 1081,497 1054,442', '#bca820'],
  ['1054,442 1124,478 1081,497', '#c4a218'], ['984,457 963,542 1081,497', '#78c27c'],
  ['1081,497 1135,540 1124,478', '#d09010'], ['1124,478 1135,540 1174,541', '#cc9810'],
  ['1174,541 1135,540 1180,642', '#c8a818'], ['1174,541 1180,642 1203,621', '#d09c10'],
  ['1203,621 1180,642 1208,715', '#c0a420'], ['1180,642 1164,733 1208,715', '#86bc4c'],
  ['963,542 1081,497 992,613', '#84c48c'], ['1081,497 1036,641 992,613', '#7cc27c'],
  ['1081,497 1135,540 1036,641', '#92c094'], ['1135,540 1082,690 1036,641', '#7ac064'],
  ['1135,540 1180,642 1082,690', '#94bd94'], ['1082,690 1180,642 1164,733', '#90bd90'],
  ['1082,690 1164,733 1064,774', '#8abf90'], ['1082,690 1064,774 1020,738', '#84c08c'],
  ['1036,641 1082,690 1020,738', '#7cc47c'], ['963,542 992,613 916,680', '#7ac27a'],
  ['864,612 963,542 916,680', '#7cc484'], ['786,600 864,612 808,692', '#78c07c'],
  ['864,612 863,710 808,692', '#78c47c'], ['864,612 916,680 863,710', '#80c480'],
  ['992,613 971,680 916,680', '#b9a922'], ['992,613 1036,641 971,680', '#7cc080'],
  ['971,680 1036,641 981,722', '#a0bc40'], ['1036,641 1020,738 981,722', '#80c480'],
  ['916,680 971,680 981,722', '#80c280'], ['916,680 981,722 930,728', '#7cc284'],
  ['916,680 863,710 896,728', '#90bd90'], ['916,680 896,728 930,728', '#92c094'],
  ['670,665 786,600 737,718', '#74c068'], ['786,600 808,692 737,718', '#84c48a'],
  ['670,665 737,718 645,771', '#76c272'], ['570,752 670,665 645,771', '#7cc27a'],
  ['737,718 733,800 645,771', '#7cc468'], ['570,752 645,771 598,878', '#b8a614'],
  ['645,771 598,878 703,867', '#7cc484'], ['645,771 733,800 703,867', '#c49410'],
  ['504,915 570,752 598,878', '#88c48e'], ['504,915 598,878 509,1010', '#94bd94'],
  ['509,1010 598,878 659,945', '#92bf92'], ['659,945 598,878 703,867', '#74c068'],
  ['659,945 703,867 717,921', '#90bc90'], ['717,921 703,867 745,873', '#78c45c'],
  ['717,921 745,873 771,901', '#7ac05c'], ['745,873 771,901 776,857', '#84c060'],
  ['703,867 745,873 763,825', '#88bd88'], ['745,873 776,857 763,825', '#8abd8c'],
  ['737,718 733,800 773,768', '#80c084'], ['733,800 773,768 797,792', '#88bd8a'],
  ['733,800 763,825 797,792', '#8cbd8e'], ['733,800 703,867 763,825', '#80c084'],
  ['763,825 797,792 820,805', '#90c094'], ['763,825 820,805 793,832', '#90bd92'],
  ['763,825 793,832 776,857', '#8cbd8e'], ['737,718 808,692 773,768', '#84c488'],
  ['808,692 773,768 824,757', '#88c08c'], ['808,692 863,710 824,757', '#86c45c'],
  ['824,757 863,710 858,766', '#88bd88'], ['773,768 824,757 797,792', '#8cbf8e'],
  ['824,757 797,792 820,805', '#8cbc90'], ['824,757 858,766 820,805', '#90bc94'],
  ['863,710 896,728 858,766', '#8cbf8e'], ['896,728 895,758 858,766', '#8cbd8e'],
  ['896,728 930,728 895,758', '#90bc92'], ['930,728 925,765 895,758', '#8cbd8e'],
  ['930,728 950,760 925,765', '#8cbd8e'], ['930,728 981,722 975,745', '#88bf8a'],
  ['930,728 975,745 950,760', '#8cbd8e'], ['950,760 925,765 940,785', '#90bd92'],
  ['950,760 940,785 950,823', '#8cbc8e'], ['950,760 985,775 950,823', '#8cbc8e'],
  ['975,745 985,775 950,760', '#90bd92'], ['981,722 1020,738 985,775', '#84c088'],
  ['1020,738 985,775 1012,797', '#84c088'], ['985,775 950,823 1012,797', '#88bd8a'],
  ['1020,738 1064,774 1012,797', '#80c084'],
];

const HOLE: [string, string][] = [
  ['858,766 895,758 880,775', '#a0ecb0'], ['895,758 925,765 905,775', '#b8fcb8'],
  ['895,758 905,775 880,775', '#b0f8b4'],
  ['858,766 880,775 870,800', '#90dca0'], ['858,766 870,800 820,803', '#90c498'],
  ['880,775 905,775 895,795', '#bcfcb4'], ['880,775 895,795 870,800', '#a8f0a8'],
  ['905,775 925,765 920,785', '#a8f8a0'], ['905,775 920,785 895,795', '#b8fcb0'],
  ['925,765 942,788 920,785', '#a0e8a0'], ['920,785 942,788 935,808', '#90f860'],
  ['895,795 920,785 915,805', '#a0fc98'], ['920,785 935,808 915,805', '#b8fcb0'],
  ['870,800 895,795 915,805', '#b0f4b0'],
  ['942,788 950,823 935,808', '#a0e8a0'],
];

const DISC_EDGE = '476,1024 486,916 521,799 587,684 670,583 765,506 866,456 965,432 1054,442 1124,478 1174,541 1203,621 1208,715 950,823 915,803 870,800 820,805 793,832 776,857 771,901';

const RED: [string, string][] = [
  ['476,1024 420,958 439,909', '#90082c'], ['476,1024 439,909 486,916', '#a00630'],
  ['439,909 451,821 486,916', '#980a2e'], ['451,821 521,799 486,916', '#a4062e'],
  ['400,893 412,850 439,909', '#8c0a2c'], ['400,893 439,909 420,958', '#a0042c'],
  ['400,893 406,775 412,850', '#780828'], ['412,850 451,821 439,909', '#a0082c'],
  ['406,775 451,821 412,850', '#8c062a'], ['406,775 436,738 451,821', '#9c062e'],
  ['436,738 498,708 451,821', '#94082c'], ['498,708 521,799 451,821', '#a4062e'],
  ['498,708 587,684 521,799', '#840828'], ['406,775 446,657 436,738', '#780828'],
  ['446,657 498,708 436,738', '#840628'], ['446,657 497,605 498,708', '#740626'],
  ['497,605 571,605 498,708', '#7c0828'], ['571,605 587,684 498,708', '#840628'],
  ['571,605 670,583 587,684', '#780626'], ['446,657 517,553 497,605', '#680422'],
  ['517,553 605,508 497,605', '#640420'], ['497,605 605,508 571,605', '#6c0422'],
  ['605,508 652,533 571,605', '#640420'], ['652,533 670,583 571,605', '#6c0422'],
  ['652,533 765,506 670,583', '#740626'], ['517,553 614,470 605,508', '#6c0624'],
  ['614,470 740,462 605,508', '#700424'], ['605,508 740,462 652,533', '#640420'],
  ['740,462 765,506 652,533', '#780626'], ['740,462 866,456 765,506', '#a0062c'],
  ['614,470 683,443 740,462', '#780626'], ['614,470 719,421 683,443', '#800828'],
  ['719,421 804,421 683,443', '#98082c'], ['683,443 804,421 740,462', '#980a2e'],
  ['804,421 866,456 740,462', '#a8042c'], ['719,421 822,400 804,421', '#900a2c'],
  ['822,400 877,411 804,421', '#a00a30'], ['804,421 877,411 866,456', '#a0062c'],
  ['877,411 965,437 866,456', '#98042c'], ['822,400 950,409 877,411', '#a00a30'],
  ['877,411 950,409 965,437', '#9c082e'], ['950,409 1054,445 965,437', '#b00434'],
];

function Faces({ data, line = 2.5 }: { data: [string, string][]; line?: number }) {
  return (
    <g stroke="#0c140c" strokeWidth={line} strokeLinejoin="round">
      {data.map(([p, f]) => <polygon key={p} points={p} fill={f} />)}
    </g>
  );
}

function Disc() {
  return (
    <g>
      <polygon points={DISC_EDGE} fill="#8abf8c" stroke="#0c140c" strokeWidth="2.500" />
      <Faces data={DISC} line={2.2} />
      <Faces data={HOLE} line={1.5} />
      <path d="M865 456V760" stroke="#0c140c" strokeWidth="3" />
      <polyline points={pts(INNER)} fill="none" stroke="#050805" strokeWidth="4.500" strokeLinejoin="round" />
    </g>
  );
}

function FullMesh() {
  return (
    <svg viewBox="0 0 1545 1174" className="block h-full w-full" role="img" aria-label="Cut sphere mesh with boundary layers">
      <Faces data={SHELL} />
      <g stroke="#0c140c" strokeWidth="2.500" strokeLinejoin="round">
        {CELLS.map((c, i) => <polygon key={i} points={pts(c.p)} fill={c.fill} />)}
      </g>
      <polyline points="151,1162 63,1043 37,915 50,706 122,495 257,301 427,162 540,112 640,72 790,42 1018,53 1202,112" fill="none" stroke="#0c140c" strokeWidth="3" />
      <Disc />
    </svg>
  );
}

function InnerMesh() {
  return (
    <svg viewBox="0 -12 1545 1174" className="block h-full w-full" role="img" aria-label="Inner sphere mesh with outlines">
      <g fill="none" stroke="#16181c" strokeWidth="3" strokeLinejoin="round">
        <polyline points="420,542 424,385 459,250 525,147 614,84 737,72 872,118 1045,91 1199,118 1317,194 1399,312 1440,456 1441,615 1290,546 1144,505" />
        <polyline points="872,118 686,205 505,347 349,533 312,595 231,747 167,961 157,1160 68,1040 45,915 78,797 157,692 277,606 420,542 580,498" />
        <path d="M872 118L868 455M420 542L490 594M157 1160L476 1024M1441 615L1204 716" />
      </g>
      <Faces data={RED} />
      <polyline points="476,1024 420,958 400,893 406,775 446,657 517,553 614,470 719,421 822,400 950,409 1054,445" fill="none" stroke="#14040a" strokeWidth="3" />
      <Disc />
    </svg>
  );
}

function Triad() {
  return (
    <svg width="66" height="50" viewBox="0 0 66 50" className="absolute bottom-9 left-4 font-['DejaVu_Sans'] text-[11px]" aria-label="Axes">
      <path d="M28 42V24" stroke="#3a6fc0" strokeWidth="1.500" />
      <path d="M28 18l-3.500 8h7z" fill="#3a86c8" />
      <path d="M28 42l17-6" stroke="#c4285a" strokeWidth="1.500" />
      <path d="M52 34l-8.500-1 2 6z" fill="#d42a5c" />
      <path d="M28 42l-10-6" stroke="#4f9d4a" strokeWidth="1.500" />
      <path d="M11 32l8 .5-3.500 5.500z" fill="#4fae3a" />
      <text x="25" y="13" fill="#111">z</text>
      <text x="55" y="34" fill="#111">x</text>
      <text x="2" y="29" fill="#111">y</text>
    </svg>
  );
}

/* ---------- graphics toolbar ---------- */

const mag = (
  <g stroke={B}><circle cx="6.500" cy="6.500" r="4.800" strokeWidth="1.600" /><path d="M10 10l5 5" strokeWidth="2.200" /></g>
);
const plane = (t: string, cx: string, cy: string) => (
  <Ic>
    <path d="M2 14V2M.5 4L2 1l1.500 3" stroke={cy} /><path d="M2 14h12M12 12.500l3 1.500-3 1.500" stroke={cx} strokeWidth="1.300" />
    <text x="4.500" y="10" fontSize="10" fill="#8a8d90" className="font-['Open_Sans']">{t}</text>
  </Ic>
);
const triadIcon = (
  <Ic><path d="M8 12V1.500M6 4l2-2.500L10 4" stroke={B} strokeWidth="1.200" /><path d="M8 12.500l7-3.500" stroke="#d4386c" strokeWidth="1.400" /><path d="M8 12.500L1 7.500M1 10V7h3" stroke="#4fae4a" strokeWidth="1.300" /></Ic>
);

function PlotToolbar({ wide }: { wide: boolean }) {
  const item = 'flex h-5 w-5 items-center justify-center';
  const on = 'flex h-5 w-5 items-center justify-center rounded-sm border border-[#2f8fd8] bg-[#9ccdf3]';
  const gap = wide ? 'gap-[3px] pl-[5px]' : 'pl-0.5';
  const caret = (label: string) => (
    <button type="button" aria-label={label} className={`flex h-5 items-center justify-center ${wide ? 'mr-[5px] w-2.5' : 'mr-[3px] w-3.5'}`}><Caret big /></button>
  );
  const sep = <span className={`h-4 w-px bg-[#cdd1d5] ${wide ? 'mx-0.5' : 'mx-1'}`} />;
  return (
    <div role="toolbar" aria-label="Graphics toolbar" className={`flex h-[29px] shrink-0 items-center ${gap}`}>
      <button type="button" aria-label="Zoom in" className={item}><Ic>{mag}<path d="M4 6.500h5M6.500 4v5" stroke={B} /></Ic></button>
      <button type="button" aria-label="Zoom out" className={item}><Ic>{mag}<path d="M4 6.500h5" stroke={B} /></Ic></button>
      <button type="button" aria-label="Zoom box" className={item}><Ic><path d="M.5 6v8.500H11M.5 6H4" stroke={B} strokeDasharray="1.500 1.500" /><g transform="translate(2.500 0)"><circle cx="6.500" cy="5.500" r="4.200" stroke={B} strokeWidth="1.600" fill="#fff" /><path d="M9.500 9l4 4.500" stroke={B} strokeWidth="2" /><path d="M4.500 5.500h4M6.500 3.500v4" stroke={B} /></g></Ic></button>
      {caret('Zoom options')}
      <button type="button" aria-label="Zoom extents" className={item}><Ic><rect x="1" y="1" width="14" height="14" stroke="#808387" strokeWidth="1.200" /><path d="M5.500 8h5M8 5.500v5" stroke={B} /><path d="M8 2l2 2.500H6zM8 14l2-2.500H6zM2 8l2.500 2V6zM14 8l-2.500 2V6z" fill={B} /></Ic></button>
      {sep}
      <button type="button" aria-label="Default view" className={item}>{triadIcon}</button>
      {caret('View options')}
      <button type="button" aria-label="View xy" className={item}>{plane('xy', '#d4386c', '#4fae4a')}</button>
      <button type="button" aria-label="View yz" className={item}>{plane('yz', '#4fae4a', B)}</button>
      <button type="button" aria-label="View xz" className={item}>{plane('xz', '#d4386c', B)}</button>
      {sep}
      <button type="button" aria-label="Rotate" className={item}><Ic><path d="M9 3.500A5.500 5.500 0 1 0 13.500 9" stroke={B} strokeWidth="1.500" strokeDasharray="14 1 3 1" /><path d="M8 0l6 3.500L8 7.500z" fill={B} /></Ic></button>
      {caret('Rotate options')}
      {sep}
      <button type="button" aria-label="Scene light" className={`flex h-5 items-center rounded-sm border border-[#2f8fd8] bg-[#9ccdf3] ${wide ? 'w-[38px]' : 'w-[37px]'}`}>
        <span className="flex w-[19px] items-center justify-center border-r border-[#2f8fd8]"><Ic><path d="M1 6h2l6-3v10l-6-3H1z" fill={B} /><path d="M10 4q4 4 0 8z" fill="#fff" stroke="#6aa0c8" /></Ic></span>
        <span className="flex flex-1 items-center justify-center"><Caret big /></span>
      </button>
      <button type="button" aria-label="Transparency" className={item}><Ic><path d="M1.500 2h10v9h-10zM4.500 5h10v9h-10zM1.500 2l3 3M11.500 2l3 3M1.500 11l3 3M11.500 11l3 3" stroke="#3f7fc0" /><rect x="5" y="5.500" width="9" height="8" fill="#bcd8f0" fillOpacity=".7" /></Ic></button>
      <button type="button" aria-label="Show grid" className={item}><Ic><rect x="1" y="1" width="14" height="14" stroke="#808387" strokeWidth="1.200" /><path d="M3.500 3.500h9v9h-9zM6.500 3.500v9M9.500 3.500v9M3.500 6.500h9M3.500 9.500h9" stroke={B} /></Ic></button>
      <button type="button" aria-label="Show axis orientation" aria-pressed="true" className={on}><Ic><rect x="1" y="1" width="14" height="14" stroke="#8a8d90" strokeWidth="1.200" /><path d="M8 12V4M6.500 6L8 4l1.500 2" stroke={B} /><path d="M8 12l4.500-3" stroke="#d4386c" strokeWidth="1.500" /><path d="M8 12L3.500 8.500" stroke="#4a8f9a" strokeWidth="1.500" /></Ic></button>
      <button type="button" aria-label="Show legends" aria-pressed="true" className={on}><Ic><rect x="1" y="1" width="14" height="14" stroke="#8a8d90" strokeWidth="1.200" /><path d="M10 3h3v3h-3z" fill="#e05a3c" /><path d="M10 6h3v3h-3z" fill="#e8b45a" /><path d="M10 9h3v4h-3z" fill="#3a6fc0" /></Ic></button>
      {sep}
      <button type="button" aria-label="Lock view" className={item}><Ic><path d="M3 7h10v8H3z" fill={B} /><path d="M5 7V5a3 3 0 0 1 6 0v2" stroke={B} strokeWidth="1.600" /></Ic></button>
      {sep}
      <button type="button" aria-label="Environment" className={item}><Ic><circle cx="8" cy="8" r="5.200" stroke={B} strokeWidth="3" strokeDasharray="4.400 1.045" /><path d="M8 1l3 5M14.500 6l-5.500.5M14 12l-3-5M8 15l-3-5M1.500 10l5.500-.5M2 4l3 5" stroke="#fff" strokeWidth=".8" /></Ic></button>
      {caret('Environment options')}
      <button type="button" aria-label="Snapshot" className={item}><Ic><path d="M0 4h4l1-2h6l1 2h4v10H0z" fill={B} /><circle cx="8" cy="8.500" r="3" stroke="#fff" strokeWidth="1.300" /></Ic></button>
      <button type="button" aria-label="Print" className={item}><Ic><path d="M4 1h8v5H4z" fill="#fff" stroke={B} /><path d="M1.500 6h13v6h-13z" fill="#b9d4ea" stroke="#6a8fb0" /><path d="M4 10h8v5H4z" fill="#fff" stroke={B} strokeWidth="1.200" /></Ic></button>
    </div>
  );
}

function Canvas({ children }: { children: ReactNode }) {
  return (
    <div className="relative min-h-0 flex-1">
      {children}
      <div className="absolute inset-x-0 top-3 pr-1.5 text-center font-['DejaVu_Sans'] text-xs text-[#15181c]">Mesh: Volume versus length</div>
      <div className="absolute top-1 right-1.5"><AppCube s={18} /></div>
      <Triad />
    </div>
  );
}

function Plots() {
  return (
    <main className="flex min-w-0 flex-1 flex-col gap-[5px]">
      <section className="flex min-h-0 flex-1 flex-col border border-[#9fd0e8] bg-linear-to-b from-[#fdfdfe] from-15% to-[#e3f0fe]">
        <div role="tablist" className="flex h-[29px] shrink-0 items-end border-b border-[#cdd5da] bg-[#fcfdfe] pl-1 text-[13px]">
          <button type="button" role="tab" className="h-[23px] w-[58px] bg-[#eeeeef] pt-px">Graphics</button>
          <div className="-mb-px ml-[9px] flex h-6 w-[63px] items-center justify-center gap-2 border border-b-0 border-[#cdd5da] bg-[#fcfdfe]">
            <button type="button" role="tab" aria-selected="true" className="pt-0.5 text-[#2f8acb]">Plot 1</button>
            <button type="button" aria-label="Close Plot 1"><Ic s={10} vb={10}><path d="M1 1l8 8M9 1L1 9" stroke={B} strokeWidth="1.500" /></Ic></button>
          </div>
          <div className="mr-[3px] mb-1 ml-auto flex items-center gap-[7px]">
            <button type="button" aria-label="Plot 1 menu" className="flex"><Caret big color={B} /></button>
            <button type="button" aria-label="Pin Plot 1"><Pin color={B} /></button>
          </div>
        </div>
        <PlotToolbar wide={false} />
        <Canvas>
          <FullMesh />
          <div className="absolute top-48 left-1 flex h-5 w-[164px] items-center gap-4 bg-[#ebf4fe] pl-1 text-[11px] text-[#dde6f1]">
            <span>▪</span>
            <span>Window Snip</span>
          </div>
        </Canvas>
      </section>
      <section className="flex min-h-0 flex-1 flex-col border border-[#cdd5da] bg-linear-to-b from-[#fdfdfe] from-15% to-[#e3f0fe]">
        <header className="flex h-[29px] shrink-0 items-center pt-2 pr-[3px] pl-[7px]">
          <h2 className="mr-auto font-['Open_Sans'] text-[19px] leading-5 font-light text-[#2a5699]">Plot 2</h2>
          <div className="flex items-center gap-[7px] pb-1">
            <button type="button" aria-label="Plot 2 menu" className="flex"><Caret big color="#4a4f55" /></button>
            <button type="button" aria-label="Pin Plot 2"><Pin /></button>
            <button type="button" aria-label="Close Plot 2"><Ic s={9} vb={10}><path d="M1 1l8 8M9 1L1 9" stroke="#33373c" strokeWidth="1.500" /></Ic></button>
          </div>
        </header>
        <PlotToolbar wide />
        <Canvas>
          <InnerMesh />
        </Canvas>
      </section>
    </main>
  );
}

/* ---------- window ---------- */

function TitleBar() {
  return (
    <header className="flex h-[22px] shrink-0 items-start bg-white">
      <div className="flex h-[19px] items-center">
        <span className="flex w-[26px] justify-start pl-[3px]"><AppCube /></span>
        <span className="mr-[3px] h-3.5 w-px bg-[#b9bcbf]" />
        {TitleIcons.map((t, i) => (
          <button key={i} type="button" aria-label={`Quick action ${i + 1}`} className="flex w-6 justify-center">{t}</button>
        ))}
        <button type="button" aria-label="Customize toolbar" className="flex w-2.5 justify-center"><Caret /></button>
        <span className="ml-1.5 h-3.5 w-px bg-[#b9bcbf]" />
      </div>
      <h1 className="flex-1 truncate pl-[100px] text-center text-xs leading-4">rcs_sphere_far_field_mesh.mph - COMSOL Multiphysics</h1>
      <div className="mr-0.5 flex h-4 items-center">
        <button type="button" aria-label="Minimize" className="flex w-[46px] justify-center"><Ic s={10} vb={10}><path d="M0 5.500h10" stroke="#111" /></Ic></button>
        <button type="button" aria-label="Restore" className="flex w-[46px] justify-center"><Ic s={10} vb={10}><path d="M.5 2.500h7v7h-7zM2.500 2.500v-2h7v7h-2" stroke="#111" /></Ic></button>
        <button type="button" aria-label="Close" className="flex w-[46px] justify-center"><Ic s={10} vb={10}><path d="M0 0l10 10M10 0L0 10" stroke="#111" /></Ic></button>
      </div>
    </header>
  );
}

export default function App() {
  return (
    <div className="flex h-screen flex-col overflow-hidden bg-[#fdfefe] font-['Roboto',sans-serif] text-[#111]">
      <TitleBar />
      <Ribbon />
      <div className="flex min-h-0 flex-1 pt-[5px] pl-[3px]">
        <ModelBuilder />
        <div className="w-[5px] shrink-0" />
        <Settings />
        <div className="w-1.5 shrink-0" />
        <Plots />
        <aside className="flex w-7 shrink-0 flex-col items-center gap-3 pt-1.5 text-xs text-[#2a5699]">
          {['Progress', 'Log', 'Messages', 'Table 1'].map((t) => (
            <button key={t} type="button" className="leading-4 [writing-mode:vertical-rl]">{t}</button>
          ))}
        </aside>
      </div>
      <footer className="flex h-[31px] shrink-0 items-center justify-center pt-2 pl-[650px] text-xs">1.73 GB | 1.93 GB</footer>
    </div>
  );
}
